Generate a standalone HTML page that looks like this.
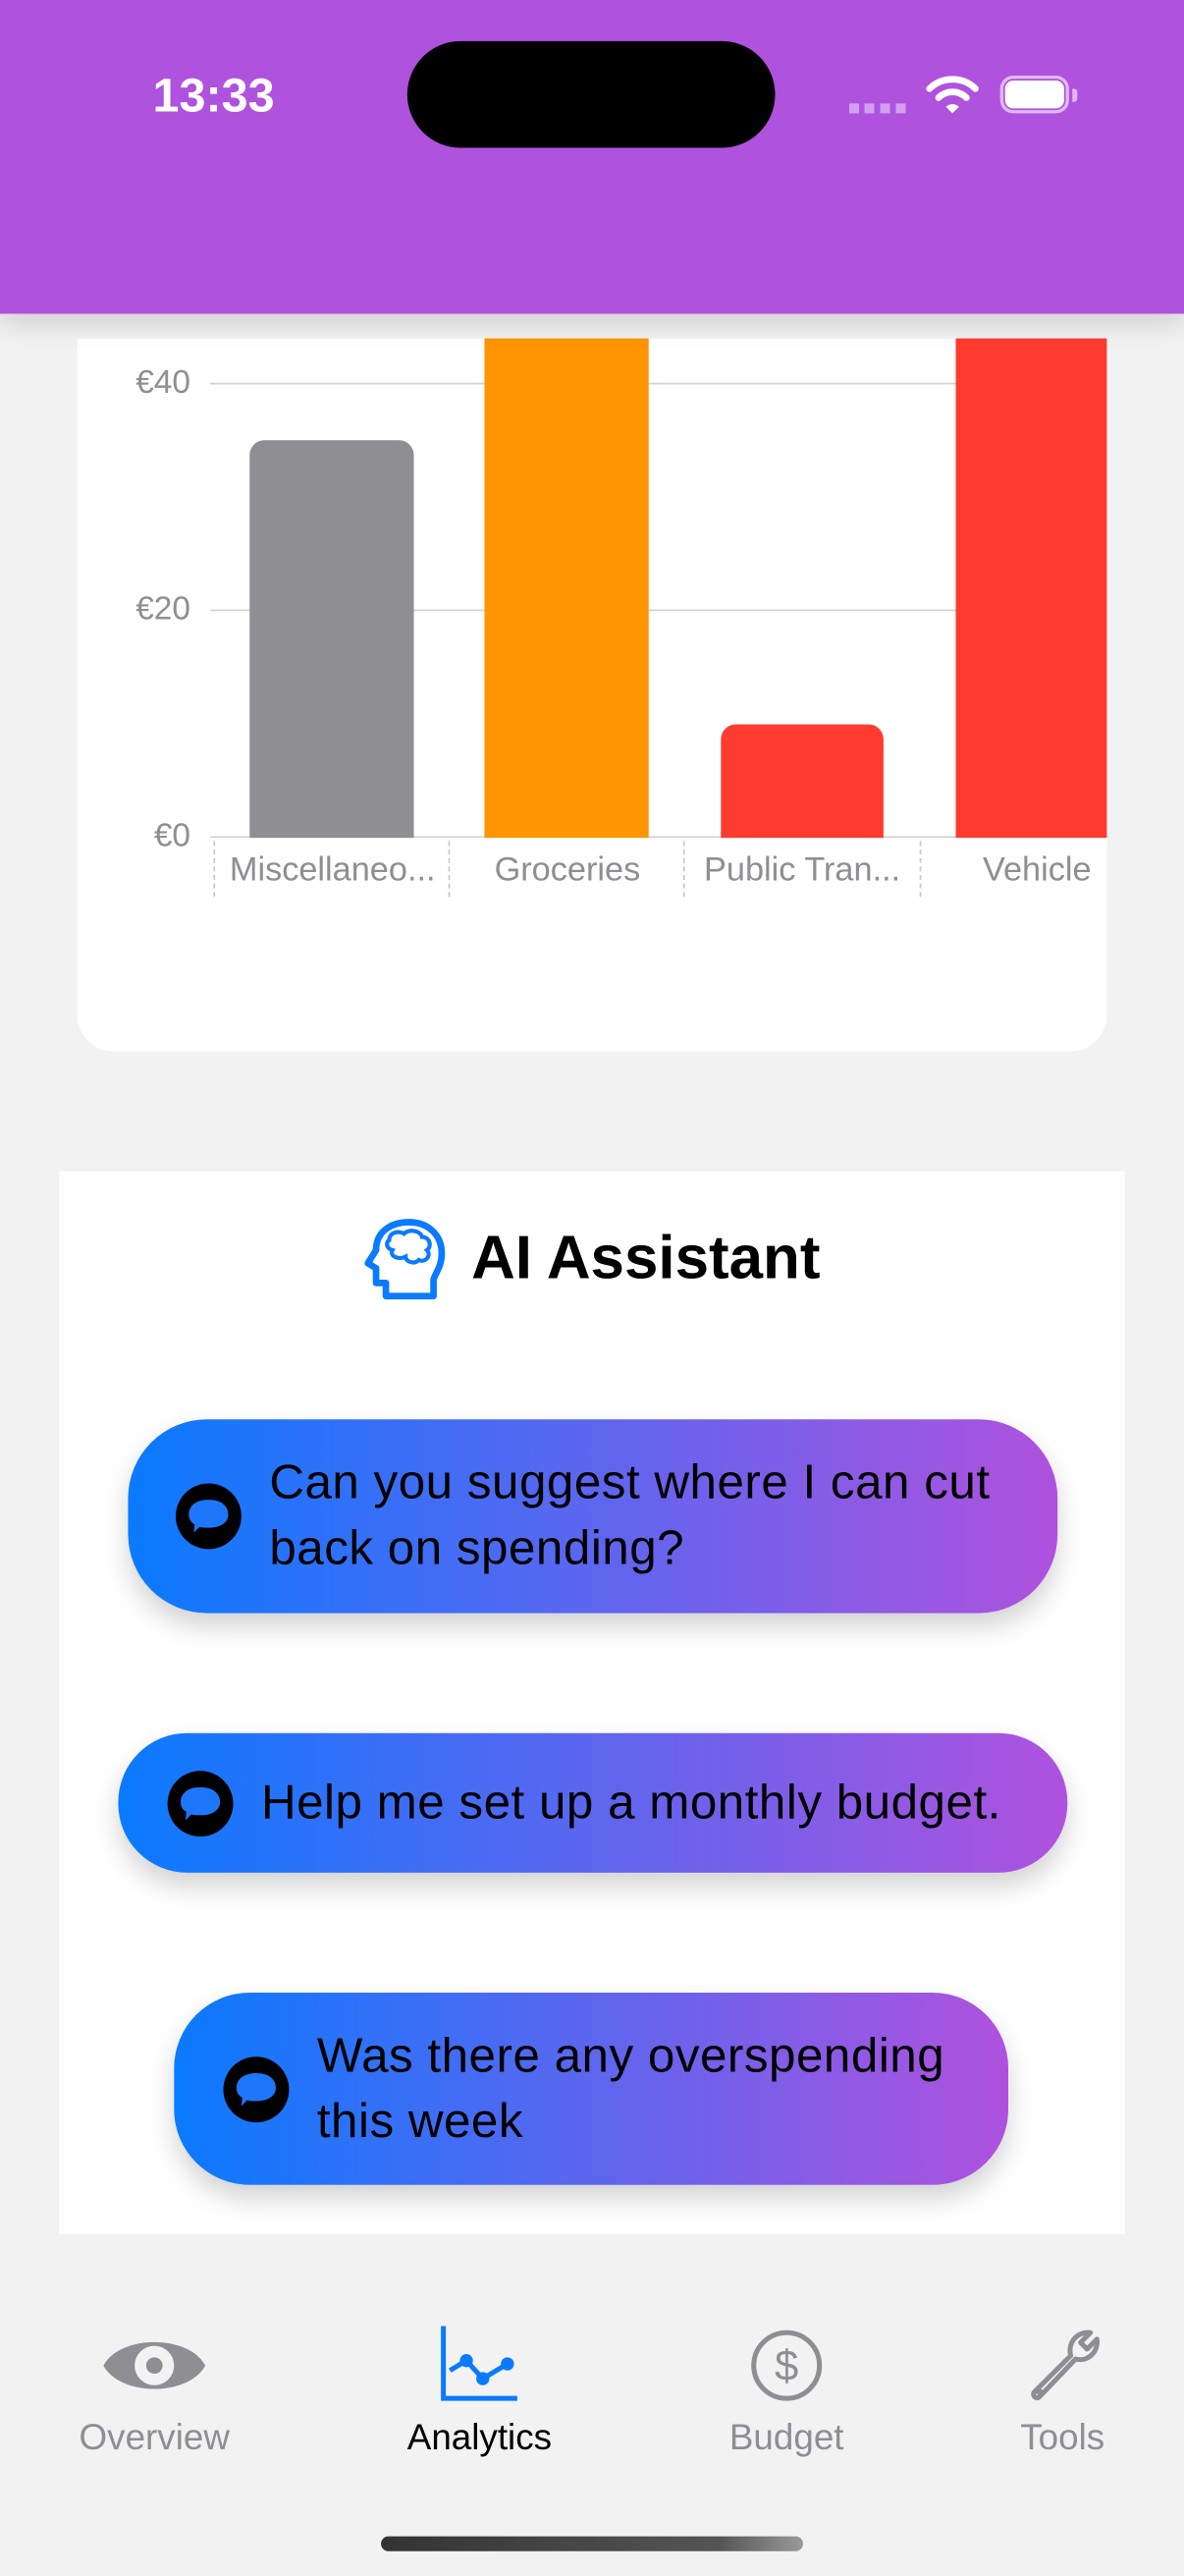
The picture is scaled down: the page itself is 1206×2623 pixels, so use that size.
<!DOCTYPE html>
<html><head><meta charset="utf-8">
<style>
html,body{margin:0;padding:0;width:1206px;height:2622px;overflow:hidden;background:#f2f2f2;}
#w{position:absolute;left:0;top:0;width:721px;height:1568px;transform:scale(1.6727);transform-origin:0 0;font-family:"Liberation Sans",sans-serif;background:#f2f2f2;}
.a{position:absolute;}
.gl{position:absolute;left:128px;width:546px;height:1px;background:#d1d1d6;}
.yl{position:absolute;right:605px;font-size:20px;color:#8e8e93;}
.xl{position:absolute;top:518px;font-size:20.5px;color:#8e8e93;text-align:center;width:143px;white-space:nowrap;}
.tk{position:absolute;top:512px;height:34px;border-left:1px dashed #c7c7cc;}
.btn{position:absolute;background:linear-gradient(90deg,#0a7aff,#af52de);box-shadow:0 8px 16px rgba(0,0,0,.18);color:#000;font-size:29.5px;line-height:40px;letter-spacing:0.3px;}
.ic{position:absolute;width:42px;height:42px;}
.tab{position:absolute;top:1471px;font-size:22px;color:#8e8e93;text-align:center;width:160px;}
</style></head><body>
<div id="w">
<!-- chart card -->
<div class="a" style="left:47px;top:206px;width:627px;height:434px;background:#fff;border-radius:0 0 22px 22px;"></div>
<div class="gl" style="top:233px"></div>
<div class="gl" style="top:371px"></div>
<div class="gl" style="top:509px"></div>
<div class="yl" style="top:222px">€40</div>
<div class="yl" style="top:360px">€20</div>
<div class="yl" style="top:498px">€0</div>
<div class="a" style="left:152px;top:268px;width:100px;height:242px;background:#8e8e93;border-radius:9px 9px 0 0"></div>
<div class="a" style="left:295px;top:206px;width:100px;height:304px;background:#ff9500;"></div>
<div class="a" style="left:439px;top:441px;width:99px;height:69px;background:#ff3b30;border-radius:9px 9px 0 0"></div>
<div class="a" style="left:582px;top:206px;width:92px;height:304px;background:#ff3b30;"></div>
<div class="tk" style="left:130px"></div><div class="tk" style="left:273px"></div><div class="tk" style="left:416px"></div><div class="tk" style="left:560px"></div>
<div class="xl" style="left:131px">Miscellaneo...</div>
<div class="xl" style="left:274px">Groceries</div>
<div class="xl" style="left:417px">Public Tran...</div>
<div class="xl" style="left:560px">Vehicle</div>
<!-- header -->
<div class="a" style="left:0;top:0;width:721px;height:191px;background:#af52de;box-shadow:0 6px 16px rgba(0,0,0,.15)"></div>
<div class="a" style="left:93px;top:43px;color:#fff;font-size:29px;font-weight:bold;">13:33</div>
<div class="a" style="left:248px;top:25px;width:224px;height:65px;background:#000;border-radius:33px"></div>
<div class="a" style="left:517px;top:63px;width:35px;height:6px;background:repeating-linear-gradient(90deg,rgba(255,255,255,.45) 0 6px,transparent 6px 9.5px)"></div>
<svg class="a" style="left:563px;top:45px" width="34" height="26" viewBox="0 0 34 26"><path d="M3 9 A20 20 0 0 1 31 9" stroke="#fff" stroke-width="4" fill="none" stroke-linecap="round"/><path d="M8.5 14.5 A12 12 0 0 1 25.5 14.5" stroke="#fff" stroke-width="4" fill="none" stroke-linecap="round"/><path d="M13 20 L17 24 L21 20 A6 6 0 0 0 13 20Z" fill="#fff"/></svg>
<div class="a" style="left:609px;top:46px;width:42px;height:23px;border:2px solid rgba(255,255,255,.6);border-radius:8px;box-sizing:border-box"></div>
<div class="a" style="left:612px;top:49px;width:36px;height:17px;background:#fff;border-radius:5px"></div>
<div class="a" style="left:653px;top:54px;width:3px;height:8px;background:rgba(255,255,255,.6);border-radius:0 2px 2px 0"></div>
<!-- AI card -->
<div class="a" style="left:36px;top:713px;width:649px;height:647px;background:#fff"></div>
<svg class="a" style="left:221px;top:741px" width="52" height="52" viewBox="0 0 52 52"><path d="M14 48 V40 H8 V31 L3 28 L8 20 C8 8 18 3 28 3 C40 3 48 11 48 22 C48 30 44 34 43 38 V48 Z" fill="none" stroke="#0a7aff" stroke-width="4" stroke-linejoin="round"/><path d="M16 14 C16 9 22 8 25 10 C28 7 35 8 36 12 C41 12 42 18 39 20 C42 23 38 28 34 26 C31 29 26 27 26 24 C22 26 16 24 18 20 C14 19 14 15 16 14Z" fill="none" stroke="#0a7aff" stroke-width="2.5"/></svg>
<div class="a" style="left:287px;top:745px;font-size:37px;font-weight:bold;color:#000">AI Assistant</div>

<div class="btn" style="left:78px;top:864px;width:566px;height:118px;border-radius:48px">
<svg class="ic" style="left:28px;top:38px" viewBox="0 0 42 42"><circle cx="21" cy="21" r="20" fill="#000"/><path d="M21 11 C29 11 33 15 33 20 C33 25 28 28 21 28 C19 28 17 28 15.5 27.5 L12 31 L12.5 26 C10 24.5 9 22.5 9 20 C9 15 13 11 21 11Z" fill="#1e76fb"/></svg>
<div class="a" style="left:86px;top:19px;width:470px">Can you suggest where I can cut back on spending?</div></div>

<div class="btn" style="left:72px;top:1055px;width:578px;height:85px;border-radius:42px">
<svg class="ic" style="left:29px;top:22px" viewBox="0 0 42 42"><circle cx="21" cy="21" r="20" fill="#000"/><path d="M21 11 C29 11 33 15 33 20 C33 25 28 28 21 28 C19 28 17 28 15.5 27.5 L12 31 L12.5 26 C10 24.5 9 22.5 9 20 C9 15 13 11 21 11Z" fill="#1e76fb"/></svg>
<div class="a" style="left:87px;top:23px;white-space:nowrap">Help me set up a monthly budget.</div></div>

<div class="btn" style="left:106px;top:1213px;width:508px;height:117px;border-radius:46px">
<svg class="ic" style="left:29px;top:38px" viewBox="0 0 42 42"><circle cx="21" cy="21" r="20" fill="#000"/><path d="M21 11 C29 11 33 15 33 20 C33 25 28 28 21 28 C19 28 17 28 15.5 27.5 L12 31 L12.5 26 C10 24.5 9 22.5 9 20 C9 15 13 11 21 11Z" fill="#1e76fb"/></svg>
<div class="a" style="left:87px;top:19px;width:395px">Was there any overspending this week</div></div>
<!-- tab bar -->
<svg class="a" style="left:61px;top:1417px" width="66" height="46" viewBox="0 0 66 46"><path d="M2 23 C12 4 54 4 64 23 C54 42 12 42 2 23Z" fill="#8e8e93"/><circle cx="33" cy="23" r="12" fill="#f2f2f2"/><circle cx="33" cy="23" r="5" fill="#8e8e93"/></svg>
<div class="tab" style="left:14px">Overview</div>
<svg class="a" style="left:267px;top:1415px" width="50" height="48" viewBox="0 0 50 48"><path d="M3 1 V45 H48" fill="none" stroke="#0a7aff" stroke-width="3"/><path d="M7 28 L17 22 L27 33 L42 24" fill="none" stroke="#0a7aff" stroke-width="3"/><circle cx="17" cy="22" r="4" fill="#0a7aff"/><circle cx="27" cy="33" r="4" fill="#0a7aff"/><circle cx="42" cy="24" r="4" fill="#0a7aff"/></svg>
<div class="tab" style="left:212px;color:#000">Analytics</div>
<svg class="a" style="left:456px;top:1417px" width="46" height="46" viewBox="0 0 46 46"><circle cx="23" cy="23" r="20" fill="none" stroke="#8e8e93" stroke-width="3"/><text x="23" y="32" text-anchor="middle" font-family="Liberation Sans" font-size="26" fill="#8e8e93">$</text></svg>
<div class="tab" style="left:399px">Budget</div>
<svg class="a" style="left:624px;top:1416px" width="48" height="48" viewBox="0 0 48 48"><path d="M6 40 L28 18 C26 10 32 3 40 4 L34 10 L38 14 L44 8 C45 16 38 22 31 20 L9 43 C7 45 4 42 6 40Z" fill="none" stroke="#8e8e93" stroke-width="3" stroke-linejoin="round"/><circle cx="9" cy="40" r="2" fill="#8e8e93"/></svg>
<div class="tab" style="left:567px">Tools</div>
<div class="a" style="left:232px;top:1544px;width:257px;height:9px;border-radius:5px;background:linear-gradient(90deg,#333,#555 80%,#999)"></div>
</div>
</body></html>
